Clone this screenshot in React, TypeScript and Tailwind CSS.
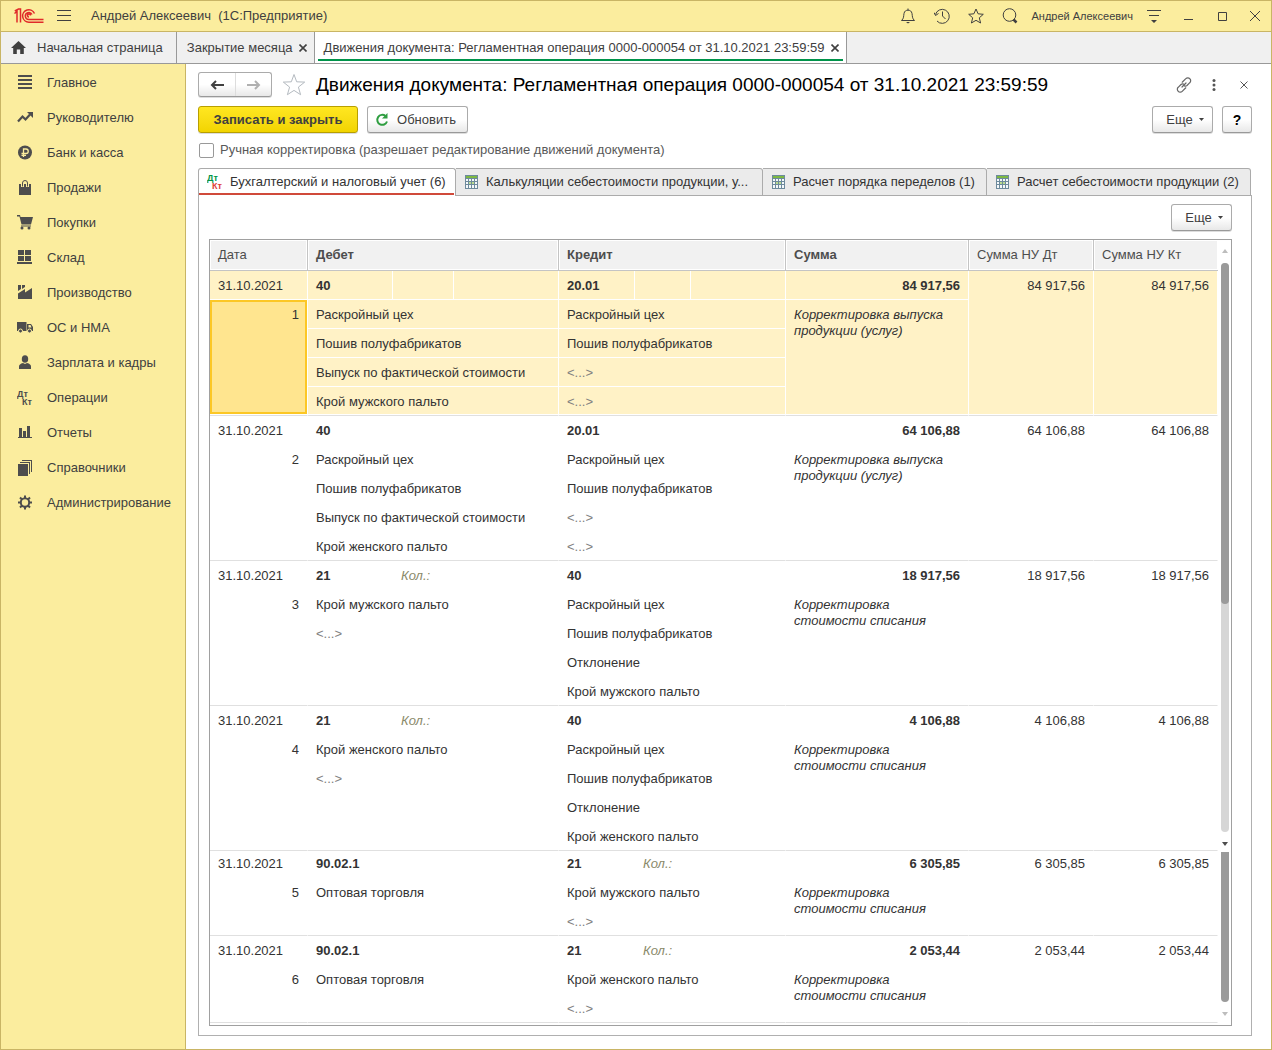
import type { ReactNode } from "react";
import clsx from "clsx";

type Entry = {
  id: number;
  debit: { account: string; qty?: boolean; lines: string[] };
  credit: { account: string; qty?: boolean; lines: string[] };
  sum: string;
  comment: string;
  rows: number;
  selected?: boolean;
  compact?: boolean;
};

const EMPTY = "<...>";

const ENTRIES: Entry[] = [
  {
    id: 1, rows: 5, selected: true, sum: "84 917,56", comment: "Корректировка выпуска продукции (услуг)",
    debit:  { account: "40",    lines: ["Раскройный цех", "Пошив полуфабрикатов", "Выпуск по фактической стоимости", "Крой мужского пальто"] },
    credit: { account: "20.01", lines: ["Раскройный цех", "Пошив полуфабрикатов", EMPTY, EMPTY] },
  },
  {
    id: 2, rows: 5, sum: "64 106,88", comment: "Корректировка выпуска продукции (услуг)",
    debit:  { account: "40",    lines: ["Раскройный цех", "Пошив полуфабрикатов", "Выпуск по фактической стоимости", "Крой женского пальто"] },
    credit: { account: "20.01", lines: ["Раскройный цех", "Пошив полуфабрикатов", EMPTY, EMPTY] },
  },
  {
    id: 3, rows: 5, sum: "18 917,56", comment: "Корректировка стоимости списания",
    debit:  { account: "21", qty: true, lines: ["Крой мужского пальто", EMPTY] },
    credit: { account: "40", lines: ["Раскройный цех", "Пошив полуфабрикатов", "Отклонение", "Крой мужского пальто"] },
  },
  {
    id: 4, rows: 5, sum: "4 106,88", comment: "Корректировка стоимости списания",
    debit:  { account: "21", qty: true, lines: ["Крой женского пальто", EMPTY] },
    credit: { account: "40", lines: ["Раскройный цех", "Пошив полуфабрикатов", "Отклонение", "Крой женского пальто"] },
  },
  {
    id: 5, rows: 3, compact: true, sum: "6 305,85", comment: "Корректировка стоимости списания",
    debit:  { account: "90.02.1", lines: ["Оптовая торговля"] },
    credit: { account: "21", qty: true, lines: ["Крой мужского пальто", EMPTY] },
  },
  {
    id: 6, rows: 3, sum: "2 053,44", comment: "Корректировка стоимости списания",
    debit:  { account: "90.02.1", lines: ["Оптовая торговля"] },
    credit: { account: "21", qty: true, lines: ["Крой женского пальто", EMPTY] },
  },
];

function Icon16({ children }: { children: ReactNode }) {
  return (
    <svg width="16" height="16" viewBox="0 0 16 16" fill="#4d4d4d" className="shrink-0" aria-hidden="true">
      {children}
    </svg>
  );
}

function DtKt({ top, bottom }: { top: string; bottom: string }) {
  return (
    <svg width="17" height="16" viewBox="0 0 17 16" className="-mr-px shrink-0 font-['Liberation_Sans',Arial,sans-serif] text-[9px] font-bold" aria-hidden="true">
      <text x="0" y="7" fill={top}>Дт</text>
      <text x="5" y="15" fill={bottom}>Кт</text>
    </svg>
  );
}

const MENU: { label: string; icon: ReactNode }[] = [
  { label: "Главное", icon: <Icon16><path d="M1 0h14v2H1zM1 4h14v2H1zM1 8h14v2H1zM1 12h14v2H1z" /></Icon16> },
  {
    label: "Руководителю",
    icon: <Icon16><path d="M1 11.500L5.500 6.500 8.500 9.500 13 4.500" fill="none" stroke="#4d4d4d" strokeWidth="2.200" /><path d="M10 2h6v6z" /></Icon16>,
  },
  {
    label: "Банк и касса",
    icon: (
      <Icon16>
        <circle cx="8" cy="7.500" r="7" />
        <path d="M6.500 12V4H9a2.200 2.200 0 0 1 0 4.500H4.500M4.500 10.300H9" fill="none" stroke="#fbed9e" strokeWidth="1.300" />
      </Icon16>
    ),
  },
  {
    label: "Продажи",
    icon: <Icon16><path d="M2 4h12v11H2z" /><path d="M5.500 7V3a2 2 0 0 1 5 0V7" fill="none" stroke="#fbed9e" strokeWidth="3" /><path d="M5.500 6.500V3a2.500 2.500 0 0 1 5 0V6.500" fill="none" stroke="#4d4d4d" /></Icon16>,
  },
  {
    label: "Покупки",
    icon: (
      <Icon16>
        <path d="M0 0h3l.5 2H16l-2 7.500H4.500L2.500 1.500H0z" />
        <path d="M4 11h10" stroke="#4d4d4d" />
        <circle cx="5" cy="13" r="1.500" /><circle cx="12" cy="13" r="1.500" />
      </Icon16>
    ),
  },
  { label: "Склад", icon: <Icon16><path d="M1 0h6v5H1zM8 0h6v5H8zM1 6h6v5H1zM8 6h6v5H8zM0 12h15v2H0z" /></Icon16> },
  { label: "Производство", icon: <Icon16><path d="M1 14V8.500l7-4.500v3.500L15 3v11zM1 0h3v4L1 6zM5 0h3v2L5 4z" /></Icon16> },
  {
    label: "ОС и НМА",
    icon: (
      <Icon16>
        <path d="M0 2h9.500v9H0z" /><path d="M10 4h4l2 3v4h-6zM11.500 5v2.500h3L13.500 5z" fillRule="evenodd" />
        <circle cx="3.500" cy="11" r="2" stroke="#fbed9e" /><circle cx="12.500" cy="11" r="2" stroke="#fbed9e" />
      </Icon16>
    ),
  },
  { label: "Зарплата и кадры", icon: <Icon16><ellipse cx="8" cy="4" rx="3.200" ry="3.800" /><path d="M2 14v-2.500Q2 9 6 8l2 1 2-1q4 1 4 3.500V14z" /></Icon16> },
  { label: "Операции", icon: <DtKt top="#4d4d4d" bottom="#4d4d4d" /> },
  { label: "Отчеты", icon: <Icon16><path d="M2 3h3v9H2zM6 6h3v6H6zM10 1h3v11h-3zM1 12h14v1H1z" /></Icon16> },
  { label: "Справочники", icon: <Icon16><path d="M1 4h10v12H1zM3 2h10v12h-1V3H3zM5 0h10v12h-1V1H5z" /></Icon16> },
  {
    label: "Администрирование",
    icon: (
      <Icon16>
        <circle cx="8" cy="7.500" r="4.200" fill="none" stroke="#4d4d4d" strokeWidth="2" />
        <path d="M8 .5v3M8 11.500v3M1 7.500h3M12 7.500h3M3 2.500l2 2M11 10.500l2 2M3 12.500l2-2M11 4.500l2-2" stroke="#4d4d4d" strokeWidth="2" />
      </Icon16>
    ),
  },
];

function TitleBar() {
  return (
    <header className="flex h-[31px] items-center border-b border-[#c9b565] bg-[#fbed9e] pl-[13px] text-[#404040]">
      <svg width="30" height="16" viewBox="0 0 30 16" fill="none" stroke="#e02a2a" strokeWidth="1.500" aria-label="1С">
        <path d="M.5 5.500L3 3.500V14.500M.8 3L4.500 1H6.500V14.500" />
        <path d="M20.500 5.500A6.200 6.200 0 1 0 15 14.200H29.500M18 6.500A3.500 3.500 0 1 0 15 11.500H29.500M16.500 7.500A1.500 1.500 0 1 0 15 9" />
      </svg>
      <button type="button" aria-label="Меню" className="ml-[13px]">
        <svg width="14" height="12" viewBox="0 0 14 12" fill="#404040"><path d="M0 0h14v1H0zM0 5h14v1H0zM0 10h14v1H0z" /></svg>
      </button>
      <div className="ml-5 flex-1 whitespace-pre text-[13px]">Андрей Алексеевич  (1С:Предприятие)</div>
      <div className="flex items-center gap-[18px]">
        <button type="button" aria-label="Уведомления">
          <svg width="16" height="16" viewBox="0 0 16 16" fill="none" stroke="#404040">
            <path d="M1.500 12.500C4 10.500 3.500 8 4 5.500 4.500 3 6 2.200 8 2.200S11.500 3 12 5.500c.5 2.500 0 5 2.500 7zM8 .5v1.700" /><path d="M6 14h4l-2 1.500z" fill="#404040" stroke="none" />
          </svg>
        </button>
        <button type="button" aria-label="История">
          <svg width="16" height="16" viewBox="0 0 16 16" fill="none" stroke="#404040"><path d="M1.500 6.500A7 7 0 1 1 3 13M8.500 3.500V8l3 3" /><path d="M0 4.500l1.500 3 3-2" /></svg>
        </button>
        <button type="button" aria-label="Избранное">
          <svg width="16" height="16" viewBox="0 0 16 16" fill="none" stroke="#404040"><path d="M8 1l2.100 4.800 5.200.5-4 3.500 1.300 5.200L8 12.300 3.400 15l1.300-5.200-4-3.500 5.200-.5z" /></svg>
        </button>
        <button type="button" aria-label="Поиск">
          <svg width="16" height="16" viewBox="0 0 16 16" fill="none" stroke="#404040"><circle cx="7.500" cy="7" r="6.300" /><path d="M11.500 11.500l3 3" strokeWidth="2.500" /></svg>
        </button>
      </div>
      <span className="ml-[13px] text-[11px]">Андрей Алексеевич</span>
      <button type="button" aria-label="Настройки" className="ml-[13px]">
        <svg width="16" height="14" viewBox="0 0 16 14" fill="#404040"><path d="M1 1h14v1H1zM3 6h10v1H3zM5 11h6l-3 3z" /></svg>
      </button>
      <button type="button" aria-label="Свернуть" className="ml-5">
        <svg width="12" height="12" viewBox="0 0 12 12" fill="#404040"><path d="M2 9h9v1H2z" /></svg>
      </button>
      <button type="button" aria-label="Развернуть" className="ml-[22px]">
        <svg width="12" height="12" viewBox="0 0 12 12" fill="none" stroke="#404040"><path d="M2.500 2.500h8v8h-8z" /></svg>
      </button>
      <button type="button" aria-label="Закрыть" className="mr-[10px] ml-[21px]">
        <svg width="12" height="12" viewBox="0 0 12 12" fill="none" stroke="#404040"><path d="M1 1l10 10M11 1L1 11" /></svg>
      </button>
    </header>
  );
}

function CloseMark() {
  return (
    <svg width="8" height="8" viewBox="0 0 8 8" fill="none" stroke="#404040" strokeWidth="1.600" aria-hidden="true"><path d="M.5.5l7 7M7.500.5l-7 7" /></svg>
  );
}

function WindowTabs() {
  return (
    <nav className="flex h-8 border-b border-[#999] bg-[#f0f0f0] text-[#404040]">
      <a href="#home" className="flex items-center gap-[11px] border-r border-[#999] pr-[13px] pl-[10px]">
        <svg width="15" height="13" viewBox="0 0 15 13" fill="#404040" aria-hidden="true"><path d="M7.500 0L15 7h-2.200v6H9.200V8.500H5.800V13H2.200V7H0z" /></svg>
        Начальная страница
      </a>
      <a href="#closing" className="flex items-center gap-[6px] border-r border-[#999] pr-[7px] pl-[10px]">
        Закрытие месяца <CloseMark />
      </a>
      <a href="#entries" className="flex border-r border-[#999] bg-white px-[3px]">
        <span className="mb-[2px] flex items-center gap-[6px] border-b-2 border-[#00934a] pt-1 pr-1 pl-[6px]">
          Движения документа: Регламентная операция 0000-000054 от 31.10.2021 23:59:59 <CloseMark />
        </span>
      </a>
    </nav>
  );
}

function Button({ className, children, label }: { className?: string; children: ReactNode; label?: string }) {
  return (
    <button
      type="button"
      aria-label={label}
      className={clsx("flex h-[27px] items-center justify-center rounded-[3px] border border-[#ababab] border-b-[#999] bg-linear-to-b from-white from-50% to-[#e8e8e8] text-[#404040] shadow-[0_1px_0_#ddd]", className)}
    >
      {children}
    </button>
  );
}

function MoreButton() {
  return (
    <Button className="w-[61px] gap-[6px] pl-[5px]">
      Еще
      <svg width="5" height="3" viewBox="0 0 5 3" fill="#404040" aria-hidden="true"><path d="M0 0h5L2.500 3z" /></svg>
    </Button>
  );
}

function SheetIcon() {
  return (
    <svg width="13" height="14" viewBox="0 0 13 14" className="shrink-0" aria-hidden="true">
      <path d="M0 0h13v14H0z" fill="#6d8a9c" />
      <path d="M1 4h2v2H1zM4 4h2v2H4zM7 4h2v2H7zM10 4h2v2h-2zM1 7h2v2H1zM7 7h2v2H7zM10 7h2v2h-2zM1 10h2v3H1zM4 10h2v3H4zM7 10h2v3H7zM10 10h2v3h-2z" fill="#f4f8fa" />
      <path d="M1 1h11v2H1z" fill="#7cb842" /><path d="M4 7h2v2H4zM7 7h2v2H7z" fill="#b9dc8f" />
    </svg>
  );
}

function RegisterTabs() {
  const rest = [
    { label: "Калькуляции себестоимости продукции, у...", width: "w-[307px]" },
    { label: "Расчет порядка переделов (1)", width: "w-[224px]" },
    { label: "Расчет себестоимости продукции (2)", width: "w-[264px]" },
  ];
  return (
    <div role="tablist" className="relative z-10 -mb-px flex h-7 text-[#333]">
      <button type="button" role="tab" aria-selected="true" className="flex w-[258px] rounded-t-[3px] border border-b-0 border-[#ababab] bg-white">
        <span className="mr-px flex h-[26px] flex-1 items-center gap-[7px] border-b-2 border-[#d04a3a] pt-[2px] pl-2 whitespace-nowrap">
          <DtKt top="#009646" bottom="#e04038" />
          Бухгалтерский и налоговый учет (6)
        </span>
      </button>
      {rest.map(t => (
        <button
          key={t.label}
          type="button"
          role="tab"
          aria-selected="false"
          className={clsx("flex items-center gap-2 rounded-tr-[3px] border border-l-0 border-[#ababab] bg-[#ebebeb] pl-[9px] whitespace-nowrap", t.width)}
        >
          <SheetIcon />
          {t.label}
        </button>
      ))}
    </div>
  );
}

function EntryRows({ entry }: { entry: Entry }) {
  const { debit, credit, rows, selected } = entry;
  const inner = selected ? "border-r border-b border-white" : "border-r border-transparent";
  const last = selected
    ? "border-r border-r-white border-b border-b-[#e0e0e0] shadow-[inset_0_-1px_0_#fff]"
    : "border-r border-r-transparent border-b border-b-[#e0e0e0]";
  const cell = "px-2 pt-[2px]";
  const qty = (show?: boolean) => (show ? <i className="text-[#8a8a6a]">Кол.:</i> : null);
  const line = (text?: string) => (text === EMPTY ? <span className="text-[#808080]">{EMPTY}</span> : text);

  return (
    <tbody className={clsx("align-top leading-[26px]", selected && "bg-[#fff2c6]")}>
      <tr className={entry.compact ? "h-[27px] leading-[22px]" : "h-[29px]"}>
        <td className={clsx(cell, inner)}>31.10.2021</td>
        <td className={clsx(cell, "font-bold", inner)}>{debit.account}</td>
        <td className={clsx(cell, inner)}>{qty(debit.qty)}</td>
        <td className={inner} />
        <td className={clsx(cell, "font-bold", inner)}>{credit.account}</td>
        <td className={clsx(cell, inner)}>{qty(credit.qty)}</td>
        <td className={inner} />
        <td className={clsx(cell, "text-right font-bold", inner)}>{entry.sum}</td>
        <td rowSpan={rows} className={clsx(cell, "text-right", last)}>{entry.sum}</td>
        <td rowSpan={rows} className={clsx(cell, "text-right", last)}>{entry.sum}</td>
      </tr>
      {Array.from({ length: rows - 1 }, (_, i) => {
        const edge = i === rows - 2 ? last : inner;
        return (
          <tr key={i} className="h-[29px]">
            {i === 0 && (
              <td
                rowSpan={rows - 1}
                className={clsx(
                  cell,
                  "text-right",
                  selected
                    ? "border-r border-b border-r-white border-b-[#e0e0e0] bg-[#ffe58f] shadow-[inset_0_-1px_0_#fff,inset_0_-3px_0_#fcc725,inset_0_0_0_2px_#fcc725]"
                    : last,
                )}
              >
                {entry.id}
              </td>
            )}
            <td colSpan={3} className={clsx(cell, edge)}>{line(debit.lines[i])}</td>
            <td colSpan={3} className={clsx(cell, edge)}>{line(credit.lines[i])}</td>
            {i === 0 && (
              <td rowSpan={rows - 1} className={clsx("pt-[7px] pr-4 pl-2 leading-4 italic", last)}>{entry.comment}</td>
            )}
          </tr>
        );
      })}
    </tbody>
  );
}

function EntriesTable() {
  const th = "border-r border-b border-[#c4c4c4] bg-[#f1f1f1] px-2 text-left shadow-[inset_0_0_0_1px_#fff]";
  return (
    <table className="w-full flex-1 table-fixed border-separate border-spacing-0 text-[13px] text-[#333]">
      <colgroup>
        <col className="w-[98px]" />
        <col className="w-[85px]" /><col className="w-[61px]" /><col className="w-[105px]" />
        <col className="w-[76px]" /><col className="w-[56px]" /><col className="w-[95px]" />
        <col className="w-[183px]" /><col className="w-[125px]" /><col className="w-[124px]" />
      </colgroup>
      <thead className="text-[#4d4d4d]">
        <tr className="h-[31px]">
          <th className={clsx(th, "font-normal")}>Дата</th>
          <th colSpan={3} className={th}>Дебет</th>
          <th colSpan={3} className={th}>Кредит</th>
          <th className={th}>Сумма</th>
          <th className={clsx(th, "font-normal")}>Сумма НУ Дт</th>
          <th className={clsx(th, "border-r-0 font-normal")}>Сумма НУ Кт</th>
        </tr>
      </thead>
      {ENTRIES.map(e => <EntryRows key={e.id} entry={e} />)}
    </table>
  );
}

function ScrollStrip() {
  return (
    <div className="flex w-[13px] shrink-0 flex-col items-center" aria-hidden="true">
      <svg width="6" height="4" viewBox="0 0 6 4" fill="#bdbdbd" className="mt-[9px] mb-[10px]"><path d="M3 0l3 4H0z" /></svg>
      <div className="flex h-[569px] w-2 flex-col rounded-full bg-[#d6d6d6]">
        <div className="h-3/5 rounded-full bg-[#9a9a9a]" />
      </div>
      <svg width="6" height="4" viewBox="0 0 6 4" fill="#4d4d4d" className="mt-[10px] mb-[6px]"><path d="M0 0h6L3 4z" /></svg>
      <div className="w-2 flex-1 rounded-b-full bg-[#9a9a9a]" />
      <svg width="6" height="4" viewBox="0 0 6 4" fill="#bdbdbd" className="mt-[10px] mb-[9px]"><path d="M0 0h6L3 4z" /></svg>
    </div>
  );
}

function DocumentPage() {
  return (
    <main className="flex min-w-0 flex-1 flex-col bg-white pr-[19px] pb-[13px] pl-3">
      <div className="mt-2 flex h-[25px] items-center">
        <div className="flex h-[25px] rounded-[3px] border border-[#ababab] border-b-[#999] bg-linear-to-b from-white from-50% to-[#e8e8e8] shadow-[0_1px_0_#ddd]">
          <button type="button" aria-label="Назад" className="flex w-[37px] items-center justify-center border-r border-[#ddd]">
            <svg width="14" height="10" viewBox="0 0 14 10" fill="none" stroke="#404040" strokeWidth="2"><path d="M14 5H2M6 1L2 5l4 4" /></svg>
          </button>
          <button type="button" aria-label="Вперед" className="flex w-[35px] items-center justify-center">
            <svg width="14" height="10" viewBox="0 0 14 10" fill="none" stroke="#b0b0b0" strokeWidth="2"><path d="M0 5h12M8 1l4 4-4 4" /></svg>
          </button>
        </div>
        <button type="button" aria-label="В избранное" className="ml-[10px]">
          <svg width="24" height="23" viewBox="0 0 24 23" fill="none" stroke="#b4bac0"><path d="M12 1.500l2.700 7.300 8 .3-6.300 5 2.200 7.600-6.600-4.300-6.600 4.300 2.200-7.600-6.300-5 8-.3z" /></svg>
        </button>
        <h1 className="ml-[10px] flex-1 text-[19px] leading-6 text-black">Движения документа: Регламентная операция 0000-000054 от 31.10.2021 23:59:59</h1>
        <button type="button" aria-label="Получить ссылку">
          <svg width="16" height="16" viewBox="0 0 16 16" fill="none" stroke="#666" strokeWidth="1.200" strokeLinecap="round">
            <path d="M6.200 5.200L9.800 1.700a2.700 2.700 0 0 1 4 0 2.700 2.700 0 0 1 0 4L11 8.500a2.500 2.500 0 0 1-2.500.5M9.800 10.800L6.200 14.300a2.700 2.700 0 0 1-4 0 2.700 2.700 0 0 1 0-4L5 7.500A2.500 2.500 0 0 1 7.500 7M6 10l4-4" />
          </svg>
        </button>
        <button type="button" aria-label="Действия" className="ml-5">
          <svg width="4" height="12" viewBox="0 0 4 12" fill="#555"><circle cx="2" cy="1.500" r="1.500" /><circle cx="2" cy="6" r="1.500" /><circle cx="2" cy="10.500" r="1.500" /></svg>
        </button>
        <button type="button" aria-label="Закрыть" className="mr-1 ml-6">
          <svg width="8" height="8" viewBox="0 0 8 8" fill="none" stroke="#555"><path d="M.5.5l7 7M7.500.5l-7 7" /></svg>
        </button>
      </div>

      <div className="mt-[9px] flex gap-[9px]">
        <button
          type="button"
          className="h-[27px] w-40 rounded-[3px] border border-[#b89f00] bg-linear-to-b from-[#ffe720] to-[#f2d400] text-[13px] font-bold text-[#404040] shadow-[0_1px_0_#ddd]"
        >
          Записать и закрыть
        </button>
        <Button className="w-[101px] gap-2 pr-1">
          <svg width="14" height="14" viewBox="0 0 14 14" fill="none" stroke="#2f9e41" strokeWidth="2" aria-hidden="true"><path d="M10.500 3A5 5 0 1 0 12 8.500" /><path d="M12.500 0v5.500H7z" fill="#2f9e41" stroke="none" /></svg>
          Обновить
        </Button>
        <div className="flex-1" />
        <MoreButton />
        <Button className="w-[30px] text-sm font-bold text-black" label="Справка">?</Button>
      </div>

      <label className="mt-[9px] flex h-4 items-center gap-[6px] text-[#595959]">
        <input type="checkbox" className="ml-px size-[15px] appearance-none rounded-[2px] border border-[#999] bg-white" />
        Ручная корректировка (разрешает редактирование движений документа)
      </label>

      <div className="mt-[10px]">
        <RegisterTabs />
      </div>
      <section className="flex flex-1 flex-col border border-[#b0b0b0] px-[10px] pt-2 pb-[9px] pr-[19px]">
        <div className="mb-2 flex justify-end">
          <MoreButton />
        </div>
        <div className="flex border border-[#a0a0a0]">
          <div className="min-w-0 flex-1 pb-[2px]">
            <EntriesTable />
          </div>
          <ScrollStrip />
        </div>
      </section>
    </main>
  );
}

export default function App() {
  return (
    <div className="flex min-h-screen flex-col border border-[#c9b565] bg-white font-['Liberation_Sans',Arial,sans-serif] text-[13px] leading-4">
      <TitleBar />
      <WindowTabs />
      <div className="flex flex-1">
        <nav className="w-[185px] shrink-0 border-r border-[#c9b565] bg-[#fbed9e] pt-px text-[#404040]">
          <ul>
            {MENU.map(item => (
              <li key={item.label}>
                <a href="#section" className="flex h-[35px] items-center gap-[14px] pl-4 whitespace-nowrap">
                  {item.icon}
                  {item.label}
                </a>
              </li>
            ))}
          </ul>
        </nav>
        <DocumentPage />
      </div>
    </div>
  );
}
